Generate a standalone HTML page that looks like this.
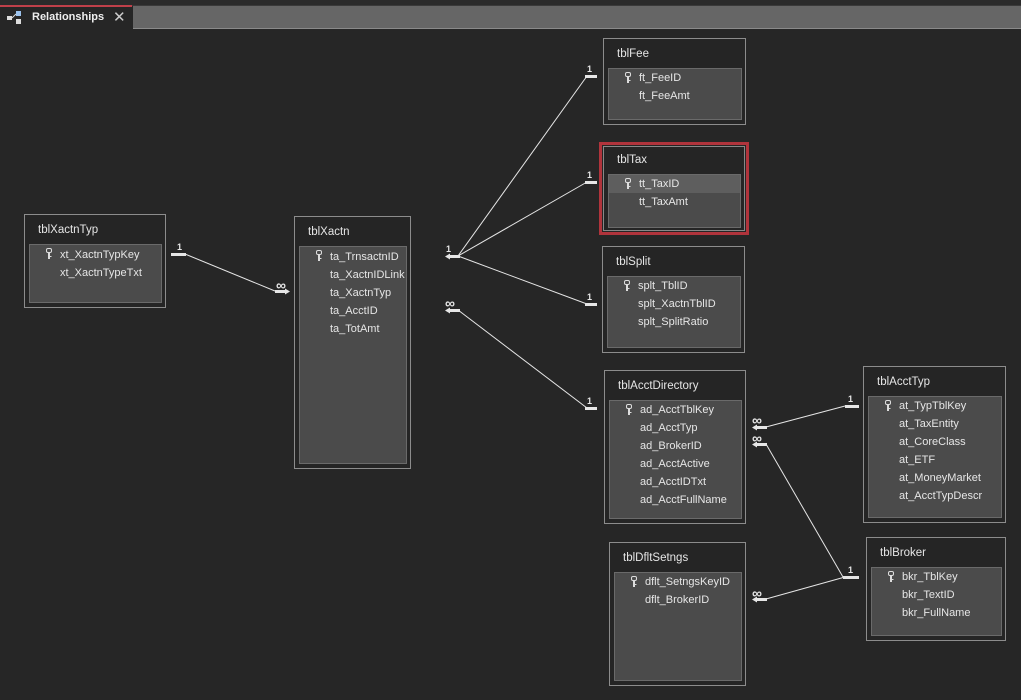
<!DOCTYPE html>
<html><head><style>
body{margin:0;width:1021px;height:700px;background:#262626;position:relative;overflow:hidden;font-family:"Liberation Sans",sans-serif;font-size:11px;color:#e6e6e6}
.top{position:absolute;left:0;top:0;width:1021px;height:5px;background:#2b2b2b;border-bottom:1px solid #3a3a3a}
.bar{position:absolute;left:133px;top:6px;width:888px;height:22px;background:#666;border-bottom:1px solid #8a8a8a}
.tab{position:absolute;left:0;top:5px;width:132px;height:24px;background:#262626;border-top:2px solid #c0404a;box-sizing:border-box}
.tab span{position:absolute;left:32px;top:4px;font-weight:bold;font-size:11px;color:#eee}
.tab .x{left:113px;top:1px;font-weight:normal;font-size:15px;color:#ccc}
.t{position:absolute;border:1px solid #8c8c8c;background:#252525;box-sizing:border-box}
.t .h{position:absolute;left:13px;top:9px;font-size:11.5px}
.t .l{position:absolute;left:4px;right:3px;top:29px;bottom:4px;background:#4b4b4b;border:1px solid #6a6a6a}
.r{position:absolute;left:30px;height:18px;line-height:18px;white-space:nowrap}
.k{position:absolute;left:16px;width:6px;height:12px;margin-top:3px}
.sel{position:absolute;left:0;right:0;height:18px;background:#5e5e5e}
</style></head><body>
<div class="top"></div><div class="bar"></div>
<div class="tab"><svg style="position:absolute;left:7px;top:4px" width="16" height="14"><rect x="0" y="5" width="5" height="4" fill="#ddd"/><rect x="9" y="0" width="5" height="5" fill="#9cc3ee"/><rect x="9" y="8" width="5" height="5" fill="#ddd"/><line x1="5" y1="7" x2="9" y2="3" stroke="#ddd"/></svg><span>Relationships</span><span class="x">✕</span></div>

<svg width="0" height="0" style="position:absolute"><defs><g id="key"><rect x="0.5" y="0.5" width="5" height="4" rx="1.5" fill="none" stroke="#ddd"/><rect x="2" y="4" width="2" height="7" fill="#ddd"/><rect x="4" y="8" width="1.5" height="1" fill="#ddd"/></g></defs></svg>

<svg style="position:absolute;left:0;top:0" width="1021" height="700" stroke="#e6e6e6" fill="#e6e6e6" font-family="Liberation Sans" font-size="9" font-weight="bold">
<g stroke-width="1">
<line x1="185" y1="254" x2="275" y2="291"/>
<line x1="458" y1="256" x2="587" y2="76"/>
<line x1="458" y1="256" x2="587" y2="182"/>
<line x1="458" y1="256" x2="587" y2="304"/>
<line x1="458" y1="310" x2="587" y2="408"/>
<line x1="766" y1="427" x2="845" y2="406"/>
<line x1="766" y1="444" x2="843" y2="577"/>
<line x1="766" y1="599" x2="845" y2="577"/>
</g>
<g stroke="none">
<rect x="171" y="253" width="15" height="3"/><text x="177" y="250">1</text>
<rect x="585" y="75" width="12" height="3"/><text x="587" y="72">1</text>
<rect x="585" y="181" width="12" height="3"/><text x="587" y="178">1</text>
<rect x="585" y="303" width="12" height="3"/><text x="587" y="300">1</text>
<rect x="585" y="407" width="12" height="3"/><text x="587" y="404">1</text>
<rect x="845" y="405" width="14" height="3"/><text x="848" y="402">1</text>
<rect x="843" y="576" width="16" height="3"/><text x="848" y="573">1</text>
<text x="446" y="252">1</text><rect x="450" y="255" width="10" height="3"/><path d="M445 256.5 l5 -3 v6z"/>
</g>
<g stroke="none" font-size="14">
<text x="445" y="308">∞</text><rect x="450" y="309" width="10" height="3"/><path d="M445 310.5 l5 -3 v6z"/>
<text x="276" y="290">∞</text><rect x="275" y="290" width="10" height="3"/><path d="M290 291.5 l-5 -3 v6z"/>
<text x="752" y="425">∞</text><rect x="757" y="426" width="10" height="3"/><path d="M752 427.5 l5 -3 v6z"/>
<text x="752" y="443">∞</text><rect x="757" y="443" width="10" height="3"/><path d="M752 444.5 l5 -3 v6z"/>
<text x="752" y="598">∞</text><rect x="757" y="598" width="10" height="3"/><path d="M752 599.5 l5 -3 v6z"/>
</g></svg>

<div class="t" style="left:24px;top:214px;width:142px;height:94px"><div class="h">tblXactnTyp</div><div class="l">
<svg class="k" style="top:0"><use href="#key"/></svg><div class="r" style="top:1px">xt_XactnTypKey</div><div class="r" style="top:19px">xt_XactnTypeTxt</div></div></div>

<div class="t" style="left:294px;top:216px;width:117px;height:253px"><div class="h">tblXactn</div><div class="l">
<svg class="k" style="top:0"><use href="#key"/></svg><div class="r" style="top:1px">ta_TrnsactnID</div><div class="r" style="top:19px">ta_XactnIDLink</div><div class="r" style="top:37px">ta_XactnTyp</div><div class="r" style="top:55px">ta_AcctID</div><div class="r" style="top:73px">ta_TotAmt</div></div></div>

<div class="t" style="left:603px;top:38px;width:143px;height:87px"><div class="h">tblFee</div><div class="l">
<svg class="k" style="top:0"><use href="#key"/></svg><div class="r" style="top:0">ft_FeeID</div><div class="r" style="top:18px">ft_FeeAmt</div></div></div>

<div class="t" style="left:599px;top:142px;width:150px;height:93px;border:3px solid #b0343c"><div style="position:absolute;inset:1px;border:1px solid #888"></div><div class="h" style="left:15px;top:9px">tblTax</div><div class="l" style="left:6px;right:5px;top:29px">
<div class="sel" style="top:0"></div><svg class="k" style="top:0"><use href="#key"/></svg><div class="r" style="top:0">tt_TaxID</div><div class="r" style="top:18px">tt_TaxAmt</div></div></div>

<div class="t" style="left:602px;top:246px;width:143px;height:107px"><div class="h">tblSplit</div><div class="l">
<svg class="k" style="top:0"><use href="#key"/></svg><div class="r" style="top:0">splt_TblID</div><div class="r" style="top:18px">splt_XactnTblID</div><div class="r" style="top:36px">splt_SplitRatio</div></div></div>

<div class="t" style="left:604px;top:370px;width:142px;height:154px"><div class="h">tblAcctDirectory</div><div class="l">
<svg class="k" style="top:0"><use href="#key"/></svg><div class="r" style="top:0">ad_AcctTblKey</div><div class="r" style="top:18px">ad_AcctTyp</div><div class="r" style="top:36px">ad_BrokerID</div><div class="r" style="top:54px">ad_AcctActive</div><div class="r" style="top:72px">ad_AcctIDTxt</div><div class="r" style="top:90px">ad_AcctFullName</div></div></div>

<div class="t" style="left:863px;top:366px;width:143px;height:157px"><div class="h">tblAcctTyp</div><div class="l">
<svg class="k" style="top:0"><use href="#key"/></svg><div class="r" style="top:0">at_TypTblKey</div><div class="r" style="top:18px">at_TaxEntity</div><div class="r" style="top:36px">at_CoreClass</div><div class="r" style="top:54px">at_ETF</div><div class="r" style="top:72px">at_MoneyMarket</div><div class="r" style="top:90px">at_AcctTypDescr</div></div></div>

<div class="t" style="left:609px;top:542px;width:137px;height:144px"><div class="h">tblDfltSetngs</div><div class="l">
<svg class="k" style="top:0"><use href="#key"/></svg><div class="r" style="top:0">dflt_SetngsKeyID</div><div class="r" style="top:18px">dflt_BrokerID</div></div></div>

<div class="t" style="left:866px;top:537px;width:140px;height:104px"><div class="h">tblBroker</div><div class="l">
<svg class="k" style="top:0"><use href="#key"/></svg><div class="r" style="top:0">bkr_TblKey</div><div class="r" style="top:18px">bkr_TextID</div><div class="r" style="top:36px">bkr_FullName</div></div></div>
</body></html>
